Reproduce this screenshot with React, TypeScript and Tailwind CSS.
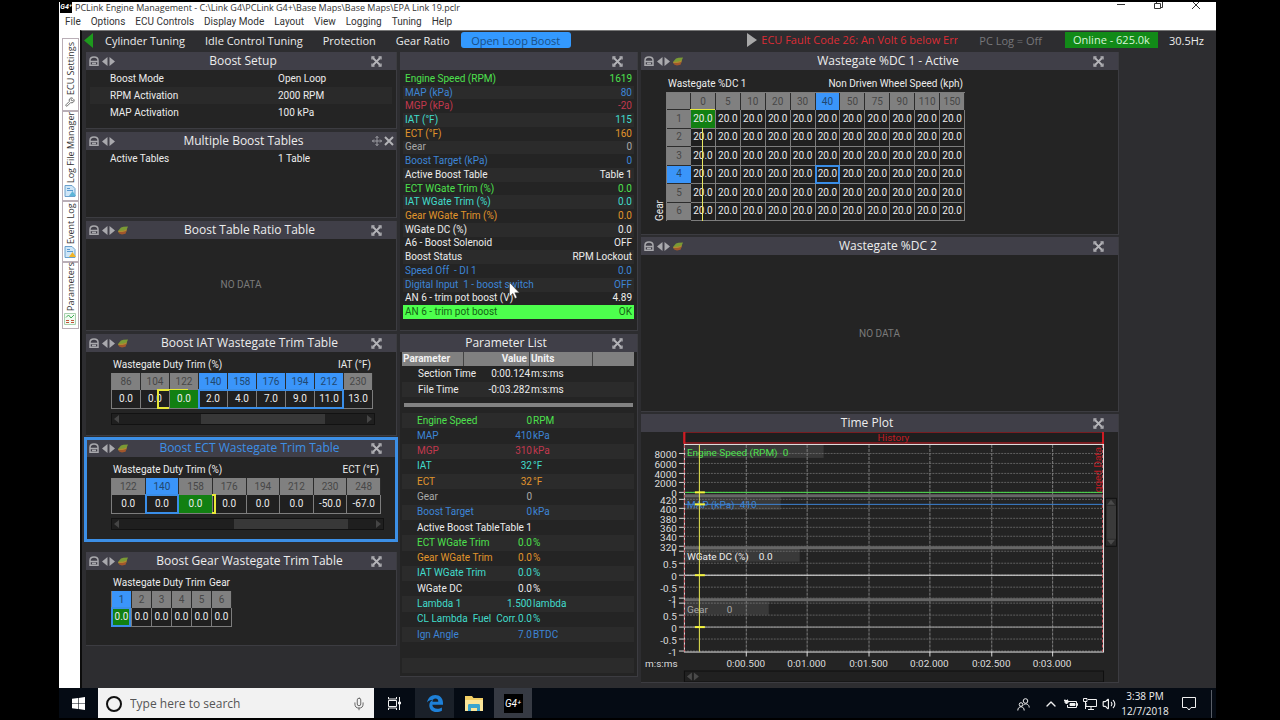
import type { ReactNode } from "react";
import clsx from "clsx";
import { Mic, Wrench, Volume2, ChevronUp } from "lucide-react";

const menus = ["File", "Options", "ECU Controls", "Display Mode", "Layout", "View", "Logging", "Tuning", "Help"];
const pages = ["Cylinder Tuning", "Idle Control Tuning", "Protection", "Gear Ratio"];

const GREEN = "text-[#4de04d]";
const BLUE = "text-[#3d85d6]";
const RED = "text-[#c2384e]";
const CYAN = "text-[#41dccb]";
const ORANGE = "text-[#e0952b]";
const GRAY = "text-[#a8a8a8]";
const WHITE = "text-[#ececec]";

const live = [
  ["Engine Speed (RPM)", "1619", GREEN],
  ["MAP (kPa)", "80", BLUE],
  ["MGP (kPa)", "-20", RED],
  ["IAT (°F)", "115", CYAN],
  ["ECT (°F)", "160", ORANGE],
  ["Gear", "0", GRAY],
  ["Boost Target (kPa)", "0", BLUE],
  ["Active Boost Table", "Table 1", WHITE],
  ["ECT WGate Trim (%)", "0.0", GREEN],
  ["IAT WGate Trim (%)", "0.0", CYAN],
  ["Gear WGate Trim (%)", "0.0", ORANGE],
  ["WGate DC (%)", "0.0", WHITE],
  ["A6 - Boost Solenoid", "OFF", WHITE],
  ["Boost Status", "RPM Lockout", WHITE],
  ["Speed Off  - DI 1", "0.0", BLUE],
  ["Digital Input  1 - boost switch", "OFF", BLUE],
  ["AN 6 - trim pot boost (V)", "4.89", WHITE],
  ["AN 6 - trim pot boost", "OK", "text-[#146414] bg-[#4dff4d]"],
];

const params = [
  ["Engine Speed", "0", "RPM", GREEN],
  ["MAP", "410", "kPa", BLUE],
  ["MGP", "310", "kPa", RED],
  ["IAT", "32", "°F", CYAN],
  ["ECT", "32", "°F", ORANGE],
  ["Gear", "0", "", GRAY],
  ["Boost Target", "0", "kPa", BLUE],
  ["Active Boost Table", "Table 1", "", WHITE],
  ["ECT WGate Trim", "0.0", "%", GREEN],
  ["Gear WGate Trim", "0.0", "%", ORANGE],
  ["IAT WGate Trim", "0.0", "%", CYAN],
  ["WGate DC", "0.0", "%", WHITE],
  ["Lambda 1", "1.500", "lambda", CYAN],
  ["CL Lambda  Fuel  Corr.", "0.0", "%", CYAN],
  ["Ign Angle", "7.0", "BTDC", BLUE],
  ["", "", "", ""],
  ["", "", "", ""],
];

function LockIcon() {
  return (
    <svg width="10" height="10" viewBox="0 0 10 10" fill="none" stroke="#a9a9ad" strokeWidth="1.5">
      <path d="M1 9.200V4.200C1 2 2.300.9 5 .9s4 1.100 4 3.300v5z" />
      <path d="M1 5.400h8M3 7.600h4" />
    </svg>
  );
}

function SurfaceIcon() {
  return (
    <svg width="10" height="9" viewBox="0 0 10 9">
      <path d="M3 1.500 5.500.8 10 .5 8.500 4 5 5 0 5z" fill="#7a9a35" />
      <path d="M0 5 5 4.600 9 3.200 8.300 5.600 4.500 6.600.5 6.500z" fill="#b08a30" />
      <path d="M.5 6.200 4.500 6 8.500 5 7.500 7.800 4 8.500 1.500 7.800z" fill="#a2562c" />
    </svg>
  );
}

function ExpandIcon() {
  return (
    <svg width="11" height="11" viewBox="0 0 11 11" fill="none" stroke="#b4b4b8" strokeWidth="1.800">
      <path d="M2 2l7 7M9 2 2 9" />
      <path d="M1 3.500V1h2.500M7.500 1H10v2.500M10 7.500V10H7.500M3.500 10H1V7.500" strokeWidth="1.300" />
    </svg>
  );
}

type PanelProps = {
  title?: string;
  nav?: boolean;
  surface?: boolean;
  movable?: boolean;
  selected?: boolean;
  className?: string;
  children?: ReactNode;
};

function Panel({ title, nav, surface, movable, selected, className, children }: PanelProps) {
  return (
    <section className={clsx("relative flex flex-col border-b border-r border-[#3c3c41] bg-[#242424]", className)}>
      <header className="flex h-[18px] shrink-0 items-center bg-[#403f48] pr-[14px]">
        {nav && (
          <div className="flex items-center gap-[3px] pl-[3px]">
            <button aria-label="Lock"><LockIcon /></button>
            <button aria-label="Previous and next">
              <svg width="13" height="9" viewBox="0 0 13 9" fill="#a9a9ad">
                <path d="M5.500 0v9L0 4.500zM7.500 0v9L13 4.500z" />
              </svg>
            </button>
            {surface && <button aria-label="Surface view"><SurfaceIcon /></button>}
          </div>
        )}
        <h2 className={clsx("flex-1 text-center font-['Open_Sans','Noto_Sans',sans-serif] text-[12px] leading-[18px] whitespace-nowrap", selected ? "text-[#3d8fe6]" : "text-[#ededed]")}>
          {title}
        </h2>
        {movable ? (
          <button aria-label="Move">
            <svg width="10" height="10" viewBox="0 0 10 10" fill="none" stroke="#9a9aa0">
              <path d="M5 0v10M0 5h10M3.500 2 5 .5 6.500 2M3.500 8 5 9.500 6.500 8M2 3.500.5 5 2 6.500M8 3.500 9.500 5 8 6.500" />
            </svg>
          </button>
        ) : (
          <button aria-label="Expand"><ExpandIcon /></button>
        )}
        {movable && (
          <button aria-label="Close" className="-mr-3 ml-[2px]">
            <svg width="10" height="10" viewBox="0 0 10 10" stroke="#b4b4b8" strokeWidth="2">
              <path d="M1 1l8 8M9 1 1 9" />
            </svg>
          </button>
        )}
      </header>
      {children}
      {selected && <div className="pointer-events-none absolute -inset-[2px] border-3 border-[#3c8fe6]" />}
    </section>
  );
}

function Settings({ rows }: { rows: string[][] }) {
  return (
    <dl className="px-1 text-[10px] leading-[17px]">
      {rows.map(([name, value], i) => (
        <div key={name} className={clsx("flex", i % 2 === 1 && "bg-[#2a2a2a]")}>
          <dt className="w-[188px] pl-5">{name}</dt>
          <dd>{value}</dd>
        </div>
      ))}
    </dl>
  );
}

type TrimProps = {
  label: string;
  unit: string;
  axis: string[];
  values: string[];
  active: number;
  sel: [number, number];
  width: string;
  marker?: ReactNode;
};

function TrimTable({ label, unit, axis, values, active, sel, width, marker }: TrimProps) {
  const [from, to] = sel;
  const pct = (n: number) => `${(n / axis.length) * 100}%`;
  return (
    <div className={clsx("ml-[25px] pt-px text-[10px]", width)}>
      <div className="flex justify-between pr-[2px] pl-[2px] leading-[16px] whitespace-nowrap">
        <span>{label}</span>
        <span>{unit}</span>
      </div>
      <div className="relative">
        <table className="w-full table-fixed border-separate border-spacing-0 border-l border-[#7d7d7d] text-center leading-none">
          <thead>
            <tr>
              {axis.map((a, i) => (
                <th
                  key={a}
                  scope="col"
                  className={clsx(
                    "h-[17px] border-r border-[#2c2c2c] p-0 font-normal",
                    i >= from && i <= to ? "bg-[#3a95fa] text-[#21476f]" : "bg-[#808080] text-[#474747]"
                  )}
                >
                  {a}
                </th>
              ))}
            </tr>
          </thead>
          <tbody>
            <tr>
              {values.map((v, i) => (
                <td
                  key={i}
                  className={clsx("h-[19px] border-r border-b border-[#7d7d7d] p-0", i === active ? "bg-[#128012]" : "bg-[#202020]")}
                >
                  {v}
                </td>
              ))}
            </tr>
          </tbody>
        </table>
        {marker}
        <div
          className="absolute bottom-0 h-[20px] border-2 border-[#3a8ee8]"
          style={{ left: pct(from), width: pct(to - from + 1) }}
        />
      </div>
    </div>
  );
}

function HScroll({ className, thumb }: { className: string; thumb: string }) {
  return (
    <div className={clsx("ml-[25px] flex h-[12px] items-center border border-[#121212] bg-[#1f1f1f] px-[2px]", className)}>
      <svg width="5" height="8" viewBox="0 0 5 8" fill="#454545"><path d="M5 0v8L0 4z" /></svg>
      <div className="h-full flex-1"><div className={clsx("h-full bg-[#383838]", thumb)} /></div>
      <svg width="5" height="8" viewBox="0 0 5 8" fill="#454545"><path d="M0 0v8l5-4z" /></svg>
    </div>
  );
}

const speeds = ["0", "5", "10", "20", "30", "40", "50", "75", "90", "110", "150"];
const gears = ["1", "2", "3", "4", "5", "6"];

function WastegateTable() {
  return (
    <div className="flex items-end pt-[6px] pl-[12px]">
      <span className="w-[13px] rotate-180 text-[10px] leading-[13px] [writing-mode:vertical-rl]">Gear</span>
      <div className="w-[299px] text-[10px]">
        <div className="flex justify-between px-[2px] leading-[16px]">
          <span>Wastegate %DC 1</span>
          <span>Non Driven Wheel Speed (kph)</span>
        </div>
        <div className="relative">
          <table className="h-[129px] w-full table-fixed border-separate border-spacing-0 border-t border-l border-[#7d7d7d] text-center leading-none">
            <thead>
              <tr>
                <th className="w-[24px] border-r border-b border-[#2c2c2c] bg-[#808080]" />
                {speeds.map((s) => (
                  <th
                    key={s}
                    scope="col"
                    className={clsx(
                      "h-[17px] border-r border-[#2c2c2c] p-0 font-normal",
                      s === "40" ? "bg-[#3a95fa] text-[#21476f]" : "bg-[#808080] text-[#474747]"
                    )}
                  >
                    {s}
                  </th>
                ))}
              </tr>
            </thead>
            <tbody>
              {gears.map((g) => (
                <tr key={g}>
                  <th
                    scope="row"
                    className={clsx(
                      "border-b border-[#2c2c2c] p-0 font-normal",
                      g === "4" ? "bg-[#3a95fa] text-[#21476f]" : "bg-[#808080] text-[#474747]"
                    )}
                  >
                    {g}
                  </th>
                  {speeds.map((s) => (
                    <td
                      key={s}
                      className={clsx(
                        "relative border-r border-b border-[#7d7d7d] p-0",
                        g === "1" && s === "0" ? "bg-[#128012]" : "bg-[#202020]"
                      )}
                    >
                      20.0
                      {g === "4" && s === "40" && <span className="absolute -inset-px border-2 border-[#3a8ee8]" />}
                    </td>
                  ))}
                </tr>
              ))}
            </tbody>
          </table>
          {/* live operating point */}
          <div className="absolute top-[17px] left-[24px] h-px w-[25px] bg-[#e8e840]" />
          <div className="absolute top-[36px] bottom-0 left-[36px] w-px bg-[#e8e860]" />
        </div>
      </div>
    </div>
  );
}

const yTicks: [number, string][] = [
  [22, "8000"], [32, "6000"], [42, "4000"], [51, "2000"], [61, "0"],
  [68, "420"], [77, "400"], [87, "380"], [96, "360"], [105, "340"], [115, "320"],
  [120, "1"], [132, "0.5"], [144, "0"], [156, "-0.5"], [167, "-1"],
  [172, "1"], [184, "0.5"], [196, "0"], [208, "-0.5"], [220, "-1"],
];
const xTicks: [number, string][] = [
  [105, "0:00.500"], [166, "0:01.000"], [228, "0:01.500"], [289, "0:02.000"], [351, "0:02.500"], [412, "0:03.000"],
];
const traces: [number, string, string, string, number, number, number][] = [
  [14, "Engine Speed (RPM)", "0", "#4de04d", 99, 139, 61],
  [66, "MAP (kPa)", "410", "#3d85d6", 56, 96, 73],
  [118, "WGate DC (%)", "0.0", "#ececec", 75, 115, 144],
  [171, "Gear", "0", "#a8a8a8", 43, 84, 196],
];

function TimePlot() {
  return (
    <svg viewBox="0 1 478 251" className="w-full" fontSize="10" role="img" aria-label="Time plot">
      <rect x="43" y="1" width="420" height="11" fill="#1e1e1e" stroke="#d01c24" />
      <path d="M43.500 0v13M463 0v13" stroke="#d01c24" strokeWidth="2" />
      <text x="253" y="10" textAnchor="middle" fill="#c01c24">History</text>
      <rect x="43" y="14" width="420" height="207" fill="#232323" />
      {yTicks.map(([y, label], i) => (
        <g key={i}>
          <path d={`M43 ${y}.5h420`} stroke="#606060" strokeDasharray="2 1" />
          <path d={`M38 ${y}.5h5`} stroke="#d8d8d8" />
          <text x="36" y={y + 5} textAnchor="end" fill="#dcdcdc">{label}</text>
        </g>
      ))}
      {xTicks.map(([x, label]) => (
        <g key={x}>
          <path d={`M${x}.5 14v207`} stroke="#7d7d7d" strokeDasharray="3 1" />
          <path d={`M${x}.5 221v5`} stroke="#d8d8d8" />
          <text x={x} y="236" textAnchor="middle" fill="#dcdcdc">{label}</text>
        </g>
      ))}
      {[65, 117, 169].map((y) => (
        <path key={y} d={`M43 ${y}h420`} stroke="#666" strokeWidth="3" />
      ))}
      {traces.map(([y, name, value, color, vx, w, line]) => (
        <g key={name}>
          <rect x="44" y={y} width={w} height="13" fill="#8a8a8a" fillOpacity=".22" />
          <path d={`M44 ${line}.500h419`} stroke={color} />
          <text x="46" y={y + 11} fill={color}>{name}</text>
          <text x={43 + vx} y={y + 11} fill={color}>{value}</text>
        </g>
      ))}
      <rect x="43.500" y="13.500" width="420" height="208" fill="none" stroke="#e4e4e4" />
      <path d="M43.500 14v207M462.500 14v207" stroke="#c8505a" strokeDasharray="3 2" />
      <clipPath id="logged"><rect x="450" y="14" width="13" height="48" /></clipPath>
      <g clipPath="url(#logged)">
        <text transform="translate(461 16) rotate(-90)" textAnchor="end" fill="#c01c24">Logged Data</text>
      </g>
      <path d="M58.500 14v207" stroke="#e8e850" />
      {[61, 73, 144, 196].map((y) => (
        <path key={y} d={`M54 ${y}.500h10`} stroke="#f5f53c" strokeWidth="2" />
      ))}
      <text x="4" y="236" fill="#dcdcdc">m:s:ms</text>
      <rect x="43.500" y="240.500" width="420" height="11" fill="#202020" stroke="#101010" />
      <path d="M51 242v8l-5-4zM53 242v8l5-4z" fill="#4a4a4a" />
      <rect x="465.500" y="67.500" width="11" height="48" fill="#2a2a2a" stroke="#121212" />
      <rect x="467" y="75" width="9" height="33" fill="#3a3a3a" />
      <path d="M471 69l4 5h-8zM471 114l4-5h-8z" fill="#4a4a4a" />
    </svg>
  );
}

function SideTab({ label, icon, height }: { label: string; icon: ReactNode; height: string }) {
  return (
    <button
      className={clsx(
        "flex w-[17px] rotate-180 items-center gap-[2px] border border-[#b9aeb6] bg-white pt-[3px] font-['Open_Sans','Noto_Sans',sans-serif] text-[9px] leading-[15px] whitespace-nowrap text-[#333] [writing-mode:vertical-rl]",
        height
      )}
    >
      <span className="rotate-180">{icon}</span>
      {label}
    </button>
  );
}

function DocIcon({ accent }: { accent: string }) {
  return (
    <svg width="12" height="12" viewBox="0 0 12 12">
      <path d="M1 .5h7l3 3v8H1z" fill="#cfe6f7" stroke="#6aa0cc" />
      <path d="M3 3.500h3M3 5.500h6" stroke="#5b9bd0" />
      <path d="M5 11 8.500 6 12 11z" fill={accent} />
    </svg>
  );
}

export default function App() {
  return (
    <div className="flex min-h-screen bg-black py-[2px] pr-[64px] pl-[59px] font-['Roboto','Noto_Sans',sans-serif] text-[#ececec]">
      <div className="flex min-w-0 flex-1 flex-col bg-white">
        <div className="flex h-[11px] items-center gap-[3px] overflow-hidden pl-px text-[9px] leading-none text-[#333]">
          <span className="flex h-[11px] w-[12px] shrink-0 items-center justify-center bg-black text-[7px] font-bold text-white italic">G4⁺</span>
          <h1 className="flex-1 font-['Open_Sans','Noto_Sans',sans-serif] leading-[11px] whitespace-nowrap">
            PCLink Engine Management - C:\Link G4\PCLink G4+\Base Maps\Base Maps\EPA Link 19.pclr
          </h1>
          <div className="flex items-start gap-[29px] self-start pr-4">
            <button aria-label="Minimize"><svg width="8" height="8" stroke="#333"><path d="M0 2.500h8" /></svg></button>
            <button aria-label="Restore">
              <svg width="9" height="8" fill="none" stroke="#333"><path d="M.5 1.500h6v5h-6zM2.500 1V0M8.500 0v5.500H7" /></svg>
            </button>
            <button aria-label="Close"><svg width="8" height="8" stroke="#333"><path d="M0-1l8 8M8-1 0 7" /></svg></button>
          </div>
        </div>
        <nav className="flex h-[17px] items-center gap-[10px] pt-px pl-[6px] text-[10px] leading-none text-[#333]">
          {menus.map((m) => <button key={m}>{m}</button>)}
        </nav>

        <div className="flex flex-1">
          <aside className="flex w-[21px] shrink-0 flex-col items-end bg-white pt-[8px] pr-px">
            <SideTab label="ECU Settings" height="h-[73px]" icon={<Wrench size={10} color="#555" />} />
            <SideTab label="Log File Manager" height="h-[90px]" icon={<DocIcon accent="#5db5d8" />} />
            <SideTab label="Event Log" height="h-[61px]" icon={<DocIcon accent="#f0b429" />} />
            <SideTab
              label="Parameters"
              height="h-[67px]"
              icon={
                <svg width="12" height="12" viewBox="0 0 12 12" fill="none">
                  <path d="M.5.5h11v11H.5z" fill="#f2faf2" stroke="#a8cfae" />
                  <path d="M2 4.500 4.500 2 7 5l3-3" stroke="#3fae55" />
                  <path d="M2 7.500h3M2 9.500h3M7 7.500h3M7 9.500h3" stroke="#c0563a" />
                </svg>
              }
            />
          </aside>

          <div className="flex min-w-0 flex-1 flex-col border-t border-l-2 border-t-[#777] border-l-[#0c0c0c] bg-[#2d2d30]">
            <div className="flex h-[21px] items-center pb-[3px] pl-[2px] font-['Open_Sans','Noto_Sans',sans-serif] text-[11px] leading-none whitespace-nowrap">
              <button aria-label="Previous page" className="mr-3">
                <svg width="9" height="15" viewBox="0 0 9 15" fill="#1d9a1d"><path d="M9 0v15L0 7.500z" /></svg>
              </button>
              <nav className="flex items-center gap-[20px]">
                {pages.map((p) => <button key={p}>{p}</button>)}
              </nav>
              <button className="ml-[11px] h-[16px] w-[110px] rounded-[3px] bg-[#3399ff] text-[#1b4f85]">Open Loop Boost</button>
              <div className="ml-auto flex items-center pr-3">
                <svg width="10" height="14" viewBox="0 0 10 14" fill="#a8a8a8"><path d="M0 0v14l10-7z" /></svg>
                <div className="ml-1 w-[197px] overflow-hidden leading-[16px] text-[#dc2c35]">ECU Fault Code 26: An Volt 6 below Error</div>
                <span className="ml-[21px] text-[#77777a]">PC Log = Off</span>
                <span className="ml-[23px] w-[93px] bg-[#128a18] text-center leading-[16px] text-[#d8f5d8]">Online - 625.0k</span>
                <span className="ml-[11px]">30.5Hz</span>
              </div>
            </div>

            <main className="grid flex-1 grid-cols-[311fr_238fr_478fr_94fr] gap-[3px] pl-1">
              <div className="flex flex-col gap-[3px]">
                <Panel title="Boost Setup" nav className="h-[77px]">
                  <Settings rows={[["Boost Mode", "Open Loop"], ["RPM Activation", "2000 RPM"], ["MAP Activation", "100 kPa"]]} />
                </Panel>
                <Panel title="Multiple Boost Tables" nav movable className="h-[86px]">
                  <Settings rows={[["Active Tables", "1 Table"]]} />
                </Panel>
                <Panel title="Boost Table Ratio Table" nav surface className="h-[110px]">
                  <p className="m-auto text-[10px] text-[#7a7a7a]">NO DATA</p>
                </Panel>
                <Panel title="Boost IAT Wastegate Trim Table" nav surface className="h-[102px] gap-1">
                  <TrimTable
                    label="Wastegate Duty Trim (%)"
                    unit="IAT (°F)"
                    axis={["86", "104", "122", "140", "158", "176", "194", "212", "230"]}
                    values={["0.0", "0.0", "0.0", "2.0", "4.0", "7.0", "9.0", "11.0", "13.0"]}
                    active={2}
                    sel={[3, 7]}
                    width="w-[262px]"
                    marker={
                      <>
                        <div className="absolute top-[16px] left-[46px] h-[20px] w-[12px] border-2 border-r-0 border-[#e8e838]" />
                        <div className="absolute top-[16px] left-[58px] h-px w-[19px] bg-[#e8e838]" />
                      </>
                    }
                  />
                  <HScroll className="w-[264px]" thumb="ml-[82px] w-[124px]" />
                </Panel>
                <Panel title="Boost ECT Wastegate Trim Table" nav surface selected className="h-[102px] gap-1">
                  <TrimTable
                    label="Wastegate Duty Trim (%)"
                    unit="ECT (°F)"
                    axis={["122", "140", "158", "176", "194", "212", "230", "248"]}
                    values={["0.0", "0.0", "0.0", "0.0", "0.0", "0.0", "-50.0", "-67.0"]}
                    active={2}
                    sel={[1, 1]}
                    width="w-[270px]"
                    marker={<div className="absolute top-[16px] left-[101px] h-[20px] w-[4px] border-2 border-l-0 border-[#e8e838]" />}
                  />
                  <HScroll className="w-[273px]" thumb="ml-[115px] w-[114px]" />
                </Panel>
                <Panel title="Boost Gear Wastegate Trim Table" nav surface className="mt-2 h-[94px] gap-1">
                  <TrimTable
                    label="Wastegate Duty Trim"
                    unit="Gear"
                    axis={gears}
                    values={["0.0", "0.0", "0.0", "0.0", "0.0", "0.0"]}
                    active={0}
                    sel={[0, 0]}
                    width="w-[121px]"
                  />
                </Panel>
              </div>

              <div className="flex flex-col gap-[3px]">
                <Panel className="h-[279px]">
                  <table className="mx-[3px] mt-[2px] h-[247px] border-separate border-spacing-0 text-[10px] leading-none">
                    <tbody>
                      {live.map(([name, value, color], i) => (
                        <tr key={name} className={clsx(color, i % 2 === 1 && i < 17 && "bg-[#2b2b2b]")}>
                          <th scope="row" className="p-0 pl-[2px] text-left font-normal whitespace-pre">{name}</th>
                          <td className="p-0 pr-[2px] text-right">{value}</td>
                        </tr>
                      ))}
                    </tbody>
                  </table>
                  {/* mouse pointer */}
                  <svg width="11" height="17" viewBox="0 0 11 17" className="absolute top-[230px] left-[109px]">
                    <path d="M.5.5v14l3.300-3 2.200 5 2-.9-2.200-4.800h4.500z" fill="#fff" stroke="#333" strokeWidth=".5" />
                  </svg>
                </Panel>
                <Panel title="Parameter List" className="h-[343px]">
                  <table className="mx-[2px] w-[232px] table-fixed border-separate border-spacing-0 text-[10px] leading-none">
                    <thead>
                      <tr className="bg-[#808080] text-left text-[#f2f2f2]">
                        <th className="h-[14px] w-[62px] border-r border-[#444] p-0 pl-px">Parameter</th>
                        <th className="w-[66px] border-r border-[#444] p-0 pr-[2px] text-right">Value</th>
                        <th className="w-[63px] border-r border-[#444] p-0 pl-px">Units</th>
                        <th className="p-0" />
                      </tr>
                    </thead>
                    <tbody>
                      <tr>
                        <td className="h-[16px] p-0 pl-4 whitespace-nowrap">Section Time</td>
                        <td className="p-0 text-right">0:00.124</td>
                        <td className="p-0 pl-px">m:s:ms</td>
                      </tr>
                      <tr className="bg-[#2b2b2b]">
                        <td className="h-[15px] p-0 pl-4 whitespace-nowrap">File Time</td>
                        <td className="p-0 text-right">-0:03.282</td>
                        <td className="p-0 pl-px">m:s:ms</td>
                        <td className="p-0" />
                      </tr>
                    </tbody>
                  </table>
                  <hr className="mx-[4px] my-[6px] h-[4px] border-0 bg-[#828282]" />
                  <table className="mx-[2px] h-[260px] w-[232px] table-fixed border-separate border-spacing-0 text-[10px] leading-none">
                    <colgroup>
                      <col className="w-[62px]" />
                      <col className="w-[68px]" />
                      <col />
                    </colgroup>
                    <tbody>
                      {params.map(([name, value, unit, color], i) => (
                        <tr key={i} className={clsx(color, i % 2 === 0 && "bg-[#2b2b2b]")}>
                          <td className="h-[15px] p-0 pl-[15px] whitespace-pre">{name}</td>
                          <td className="p-0 text-right">{value}</td>
                          <td className="p-0 pl-px">{unit}</td>
                        </tr>
                      ))}
                    </tbody>
                  </table>
                </Panel>
              </div>

              <div className="flex flex-col gap-[2px]">
                <Panel title="Wastegate %DC 1 - Active" nav surface className="h-[183px]">
                  <WastegateTable />
                </Panel>
                <Panel title="Wastegate %DC 2" nav surface className="h-[175px]">
                  <p className="m-auto text-[10px] text-[#7a7a7a]">NO DATA</p>
                </Panel>
                <Panel title="Time Plot">
                  <TimePlot />
                </Panel>
              </div>
            </main>
            <div className="h-1 shrink-0" />
          </div>
        </div>

        <footer className="flex h-[30px] shrink-0 items-center bg-[#050b14]">
          <button aria-label="Start" className="flex w-[39px] justify-center">
            <svg width="13" height="13" viewBox="0 0 13 13" fill="#fff">
              <path d="M0 1.800 6 1v5.200H0zM6.600.9 13 0v6.200H6.600zM0 6.800h6V12l-6-.8zM6.600 6.800H13V13l-6.400-.9z" />
            </svg>
          </button>
          <div className="flex h-full w-[276px] items-center bg-[#f2f2f2] px-2 pt-[2px]">
            <svg width="16" height="16" fill="none" stroke="#111" strokeWidth="2"><circle cx="8" cy="8" r="7" /></svg>
            <input aria-label="Search" placeholder="Type here to search" className="ml-2 min-w-0 flex-1 bg-transparent font-['Open_Sans','Noto_Sans',sans-serif] text-[12px] outline-none placeholder:text-[#555]" />
            <Mic size={14} color="#555" strokeWidth={1.5} />
          </div>
          <button aria-label="Task view" className="flex w-[41px] justify-center">
            <svg width="13" height="13" viewBox="0 0 13 13" fill="none" stroke="#f0f0f0">
              <path d="M.5 3.500h8v6h-8zM.5 0v2h8V0M.5 13v-2h8v2M11.500 0v13" />
              <path d="M10.500 5h2v2h-2z" fill="#f0f0f0" />
            </svg>
          </button>
          <button aria-label="Edge" className="flex h-full w-[39px] items-center justify-center bg-[#1a2029]">
            <svg width="16" height="17" viewBox="0 0 16 17" fill="#1e80d8">
              <path d="M0 7.500C.7 3 4 0 8.300 0 13 0 16 3.300 16 8v1.800H5.300c.2 2.700 2.600 4 5 4 1.800 0 3.300-.5 4.600-1.300v3.300C13.500 16.600 11.500 17 9.500 17 5 17 2.300 14.300 2.300 10.500c0-2.600 1.400-4.600 3.600-5.700C3.500 4.900 1.300 5.700 0 7.500zM5.400 6.700h5.900c0-2-1-3.100-2.800-3.100-1.700 0-2.800 1.200-3.100 3.100z" />
            </svg>
          </button>
          <button aria-label="File Explorer" className="flex w-[40px] justify-center">
            <svg width="18" height="15" viewBox="0 0 18 15">
              <path d="M0 0h7l1.500 2H18v13H0z" fill="#f2cf66" />
              <path d="M0 4h18v11H0z" fill="#fbe59a" />
              <path d="M3 15V9.500C3 8.500 3.500 8 4.500 8h9c1 0 1.500.5 1.500 1.500V15h-3v-3H6v3z" fill="#3aa5cf" />
            </svg>
          </button>
          <button className="flex h-full w-[38px] items-center justify-center bg-[#363a43]">
            <span className="flex h-[19px] w-[19px] items-center justify-center bg-black text-[10px] text-white italic">G4⁺</span>
          </button>
          <div className="ml-auto flex items-center gap-[5px] pt-[2px] text-[#f0f0f0]">
            <svg width="13" height="13" viewBox="0 0 13 13" fill="none" stroke="#f0f0f0" className="mr-2">
              <circle cx="8.500" cy="3" r="2.300" /><circle cx="4" cy="6.500" r="1.800" />
              <path d="M.8 12.500c0-5 6.400-5 6.400 0M6.500 7c2.500-2.300 5.700-.5 5.700 2.500" />
            </svg>
            <ChevronUp size={16} strokeWidth={2} />
            <svg width="14" height="10" viewBox="0 0 14 10" fill="none" stroke="#f0f0f0">
              <path d="M4 2.500h8.500v6H3.500V6M12.500 4.500h1v2h-1" />
              <path d="M6 4.500h5v2H6zM0 1.500h4v2L2.500 5 1 3.500V.5M3.500.5v1" fill="#f0f0f0" />
            </svg>
            <svg width="14" height="12" viewBox="0 0 14 12" fill="none" stroke="#f0f0f0">
              <path d="M5 1.500h8.500v7H3V5M8 8.500v3M5 11.500h6" />
              <path d="M.5.500h3.500v3H.5zM2.500 4v7" />
            </svg>
            <Volume2 size={14} />
            <div className="w-[48px] text-center font-['Open_Sans','Noto_Sans',sans-serif] text-[10px] leading-[15px] whitespace-nowrap">
              <div>3:38 PM</div>
              <div>12/7/2018</div>
            </div>
            <button aria-label="Notifications" className="ml-2">
              <svg width="14" height="14" viewBox="0 0 14 14" fill="none" stroke="#f0f0f0"><path d="M.5.5h13v10H9L7 13l-2-2.500H.5z" /></svg>
            </button>
            <div className="ml-[10px] h-[28px] w-[5px] border-l border-[#5a5f68]" />
          </div>
        </footer>
      </div>
    </div>
  );
}
